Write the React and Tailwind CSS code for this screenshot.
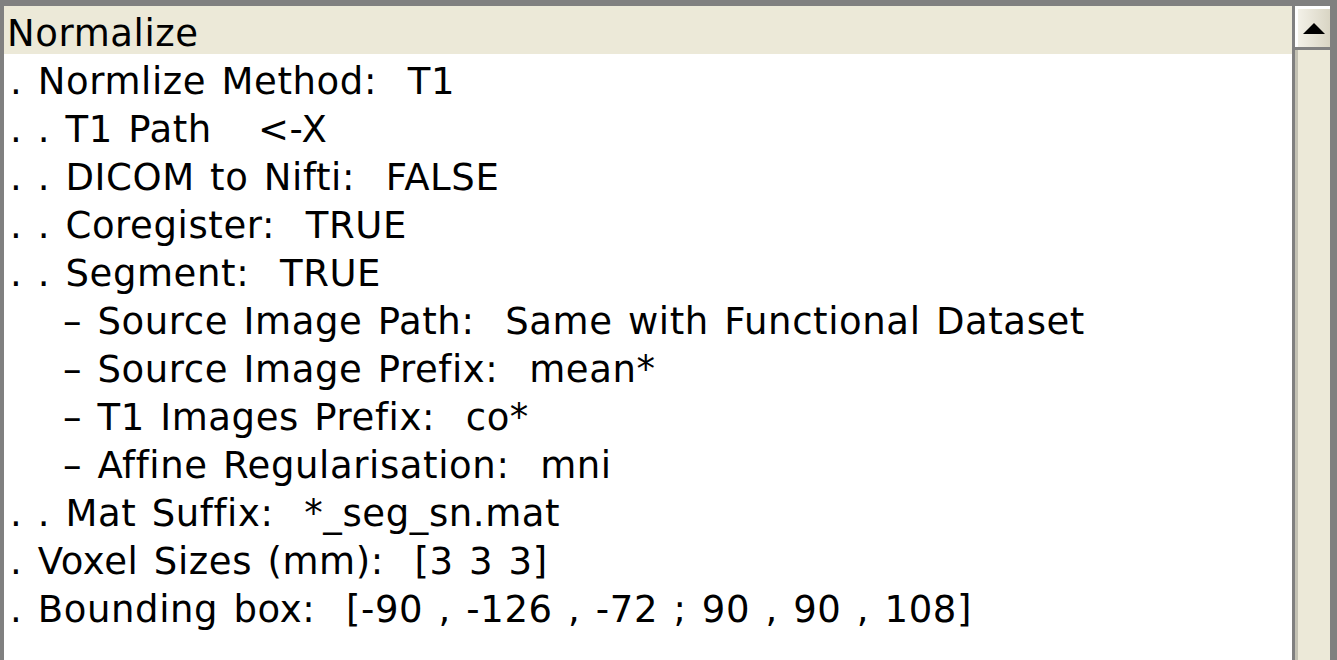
const ROWS = [
  { t: '. Normlize Method:  T1' },
  { t: '. . T1 Path   <-X' },
  { t: '. . DICOM to Nifti:  FALSE' },
  { t: '. . Coregister:  TRUE' },
  { t: '. . Segment:  TRUE' },
  { t: '– Source Image Path:  Same with Functional Dataset', sub: true },
  { t: '– Source Image Prefix:  mean*', sub: true },
  { t: '– T1 Images Prefix:  co*', sub: true },
  { t: '– Affine Regularisation:  mni', sub: true },
  { t: '. . Mat Suffix:  *_seg_sn.mat' },
  { t: '. Voxel Sizes (mm):  [3 3 3]' },
  { t: '. Bounding box:  [-90 , -126 , -72 ; 90 , 90 , 108]' },
]

function ScrollBar() {
  return (
    <div className="w-[35px] flex flex-col gap-[3px]">
      <div className="h-[41px] border-t-[3px] border-l-[3px] border-white bg-gradient-to-r from-[#f3f1e8] to-[#d9d5c4] flex items-center justify-center">
        <svg width="22" height="11" viewBox="0 0 22 11">
          <polygon points="11,0 22,11 0,11" fill="#000" />
        </svg>
      </div>
      <div className="flex-1 bg-[#ece9d8] border-l-[3px] border-[#c3c1b3]" />
    </div>
  )
}

export default function App() {
  return (
    <div className="w-[1337px] h-[660px] bg-[#808080] pt-[6px] pl-[4px] pr-[7px] flex gap-[3px] overflow-hidden">
      <div
        className="flex-1 bg-white text-black text-[37px] whitespace-pre tracking-[0.6px] [word-spacing:3px]"
        style={{ fontFamily: '"DejaVu Sans", sans-serif' }}
      >
        <div className="h-12 leading-[56px] pl-[3px] bg-[#ece9d8]">Normalize</div>
        {ROWS.map((r, i) => (
          <div key={i} className={r.sub ? 'h-12 leading-[56px] pl-[59px]' : 'h-12 leading-[56px] pl-[6px]'}>
            {r.t}
          </div>
        ))}
      </div>
      <ScrollBar />
    </div>
  )
}
